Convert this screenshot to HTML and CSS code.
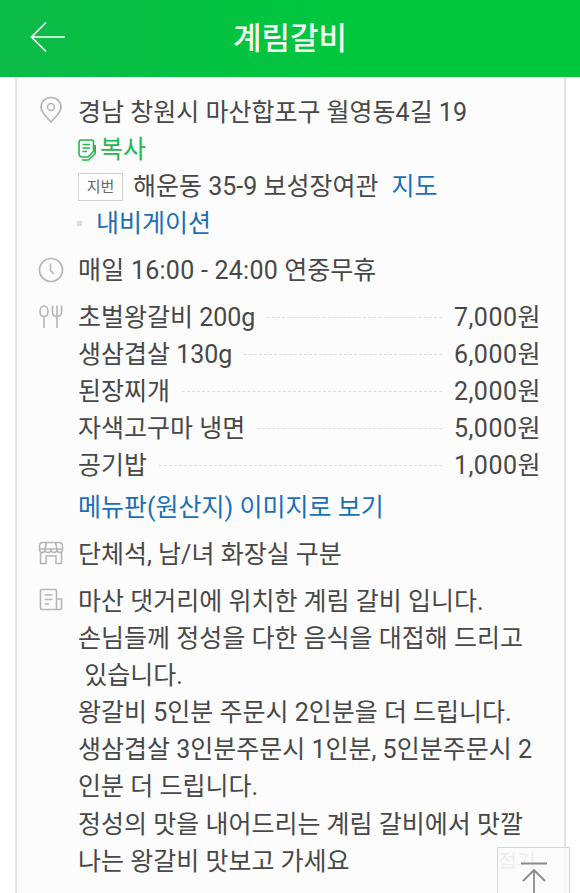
FILE: index.html
```html
<!DOCTYPE html>
<html lang="ko">
<head>
<meta charset="utf-8">
<title>계림갈비</title>
<link rel="stylesheet" href="styles.css">
</head>
<body>
<header class="top">
  <svg class="back" viewBox="0 0 36 32" width="36" height="32"><path d="M35 16H2M16 1.500L1.500 16L16 30.500" fill="none" stroke="#fff" stroke-width="1.700"/></svg>
  <h1 class="title">계림갈비</h1>
</header>
<main class="card">
  <section class="row">
    <svg class="icon pin" viewBox="0 0 24 28" width="24" height="28"><path d="M12 1.500C6 1.500 2 6 2 11C2 17 9 22.500 12 26C15 22.500 22 17 22 11C22 6 18 1.500 12 1.500Z" fill="none" stroke="#b5b5b5" stroke-width="1.700"/><circle cx="12" cy="11" r="3.500" fill="none" stroke="#b5b5b5" stroke-width="1.500"/></svg>
    <div class="body">
      <div class="line">경남 창원시 마산합포구 월영동4길 19</div>
      <div class="line copy">
        <svg class="copy-icon" viewBox="0 0 18 24" width="18" height="24"><path d="M13.500 2H3.500C2 2 1 3 1 4.500V15.500C1 17.500 2.500 19 4.500 19H10L15.500 13.500V4C15.500 2.800 14.800 2 13.500 2ZM4.500 6.500H12M4.500 10H12M4.500 13.500H9M4 22H10.500L17.200 15.500V7" fill="none" stroke="#1fb84d" stroke-width="1.600"/></svg><span>복사</span>
      </div>
      <div class="line jibun"><span class="tag">지번</span><span>해운동 35-9 보성장여관</span><a class="link map">지도</a></div>
      <div class="line nav"><i class="dot"></i><a class="link">내비게이션</a></div>
    </div>
  </section>
  <section class="row">
    <svg class="icon" viewBox="0 0 26 26" width="26" height="26"><circle cx="13" cy="13" r="11.500" fill="none" stroke="#b5b5b5" stroke-width="1.700"/><path d="M12.500 6.500V13.500L16 17" fill="none" stroke="#b5b5b5" stroke-width="1.500"/></svg>
    <div class="body"><div class="line"><span class="hours">매일 16:00 - 24:00</span> 연중무휴</div></div>
  </section>
  <section class="row">
    <svg class="icon" viewBox="0 0 26 26" width="26" height="26"><path d="M6 2C3.500 2 2 4.500 2 7.500C2 10.500 3.500 12.500 6 12.500C8.500 12.500 10 10.500 10 7.500C10 4.500 8.500 2 6 2ZM6 12.500V24M14.500 1.500V8C14.500 11 16.500 12.500 19 12.500C21.500 12.500 23.500 11 23.500 8V1.500M19 1.500V24" fill="none" stroke="#b5b5b5" stroke-width="1.600"/></svg>
    <div class="body">
      <div class="menu"><span>초벌왕갈비 200g</span><i class="leader"></i><span class="num">7,000원</span></div>
      <div class="menu"><span>생삼겹살 130g</span><i class="leader"></i><span class="num">6,000원</span></div>
      <div class="menu"><span>된장찌개</span><i class="leader"></i><span class="num">2,000원</span></div>
      <div class="menu"><span>자색고구마 냉면</span><i class="leader"></i><span class="num">5,000원</span></div>
      <div class="menu"><span>공기밥</span><i class="leader"></i><span class="num">1,000원</span></div>
      <div class="line more"><a class="link">메뉴판(원산지) 이미지로 보기</a></div>
    </div>
  </section>
  <section class="row">
    <svg class="icon" viewBox="0 0 26 24" width="26" height="24"><path d="M5 1.500C3 1.500 1.500 3 1.500 5V8H24.500V5C24.500 3 23 1.500 21 1.500ZM8.500 1.500L7 8C7 10.500 6 11.500 4.300 11.500C2.500 11.500 1.500 10.500 1.500 8M17.500 1.500L19 8C19 10.500 20 11.500 21.700 11.500C23.500 11.500 24.500 10.500 24.500 8M7 8C7 10.500 8.500 11.500 10 11.500C11.500 11.500 13 10.500 13 8C13 10.500 14.500 11.500 16 11.500C17.500 11.500 19 10.500 19 8M2.500 11V22.500H8V15H18V22.500H23.500V11" fill="none" stroke="#b5b5b5" stroke-width="1.500"/></svg>
    <div class="body"><div class="line">단체석, 남/녀 화장실 구분</div></div>
  </section>
  <section class="row">
    <svg class="icon" viewBox="0 0 24 24" width="24" height="24"><path d="M17 21.500H3C2 21.500 1.500 21 1.500 20V3C1.500 2 2 1.500 3 1.500H16C17 1.500 17.500 2 17.500 3V21.500H21C22 21.500 22.500 21 22.500 20V11H17.500M5.500 7H13.500M5.500 11.500H13.500M5.500 16H10" fill="none" stroke="#b5b5b5" stroke-width="1.600"/></svg>
    <div class="body desc">마산 댓거리에 위치한 계림 갈비 입니다.<br>손님들께 정성을 다한 음식을 대접해 드리고<br>&nbsp;있습니다.<br>왕갈비 5인분 주문시 2인분을 더 드립니다.<br>생삼겹살 3인분주문시 1인분, 5인분주문시 2<br>인분 더 드립니다.<br>정성의 맛을 내어드리는 계림 갈비에서 맛깔<br>나는 왕갈비 맛보고 가세요</div>
  </section>
</main>
<button class="to-top">
  <span class="fold">접기</span>
  <svg viewBox="0 0 28 36" width="28" height="36"><path d="M1 1.500H27M14 8V36M3 19L14 8L25 19" fill="none" stroke="#8a8a8a" stroke-width="1.800"/></svg>
</button>
</body>
</html>
```
FILE: styles.css
```css
* { box-sizing: border-box; }
html, body { margin: 0; height: 893px; overflow: hidden; }
body {
  position: relative;
  background: #fff;
  color: #484848;
  font-family: Roboto, "Noto Sans CJK KR", sans-serif;
  font-size: 25px;
  line-height: 37px;
}
.top {
  height: 77px;
  background: linear-gradient(90deg, #0cbb48, #00c73e 60%);
  display: flex;
  align-items: center;
  justify-content: center;
  position: relative;
}
.back { position: absolute; left: 30px; top: 21px; }
.title { margin: 0; color: #f2fbf4; font-size: 31px; font-weight: 500; line-height: 77px; }
.card {
  margin: 0 14px 0 15px;
  height: 816px;
  padding: 17px 23px 0 21px;
  background: #fcfcfc;
  border-left: 2px solid #e3e3e3;
  border-right: 2px solid #e3e3e3;
  display: flex;
  flex-direction: column;
  gap: 10px;
}
.row { display: flex; align-items: flex-start; }
.icon { flex: none; width: 26px; margin: 5px 14px 0 0; }
.pin { margin-top: 2px; }
.body { flex: 1; min-width: 0; }
.line { height: 37px; white-space: nowrap; }
.num { letter-spacing: .5px; }
.hours { letter-spacing: .25px; }
.copy { display: flex; align-items: center; color: #1fb84d; }
.copy-icon { margin-right: 4px; }
.jibun { display: flex; align-items: center; }
.tag {
  width: 45px; height: 28px;
  margin-right: 10px;
  border: 1px solid #cfcfcf;
  font-size: 15px;
  line-height: 26px;
  text-align: center;
  color: #666;
  background: #fff;
}
.link { color: #1a6fb5; }
.map { margin-left: 13px; }
.nav { display: flex; align-items: center; }
.dot { width: 5px; height: 5px; margin: 0 14px 0 -1px; background: #dcdcdc; }
.menu { display: flex; align-items: center; height: 37px; }
.leader { flex: 1; margin: 0 12px; border-top: 1px dashed #dedede; }
.more { margin-top: 5px; }
.desc { line-height: 37.1px; white-space: nowrap; }
.to-top {
  position: absolute;
  left: 497px; top: 847px;
  width: 73px; height: 46px;
  padding: 0;
  border: 1px solid #d6d6d6;
  border-bottom: 0;
  background: rgba(250,250,250,.85);
  overflow: hidden;
}
.to-top svg { position: absolute; left: 22px; top: 14px; }
.fold { position: absolute; left: 0; top: -1px; font-size: 19px; line-height: 26px; color: #ececec; }
```
